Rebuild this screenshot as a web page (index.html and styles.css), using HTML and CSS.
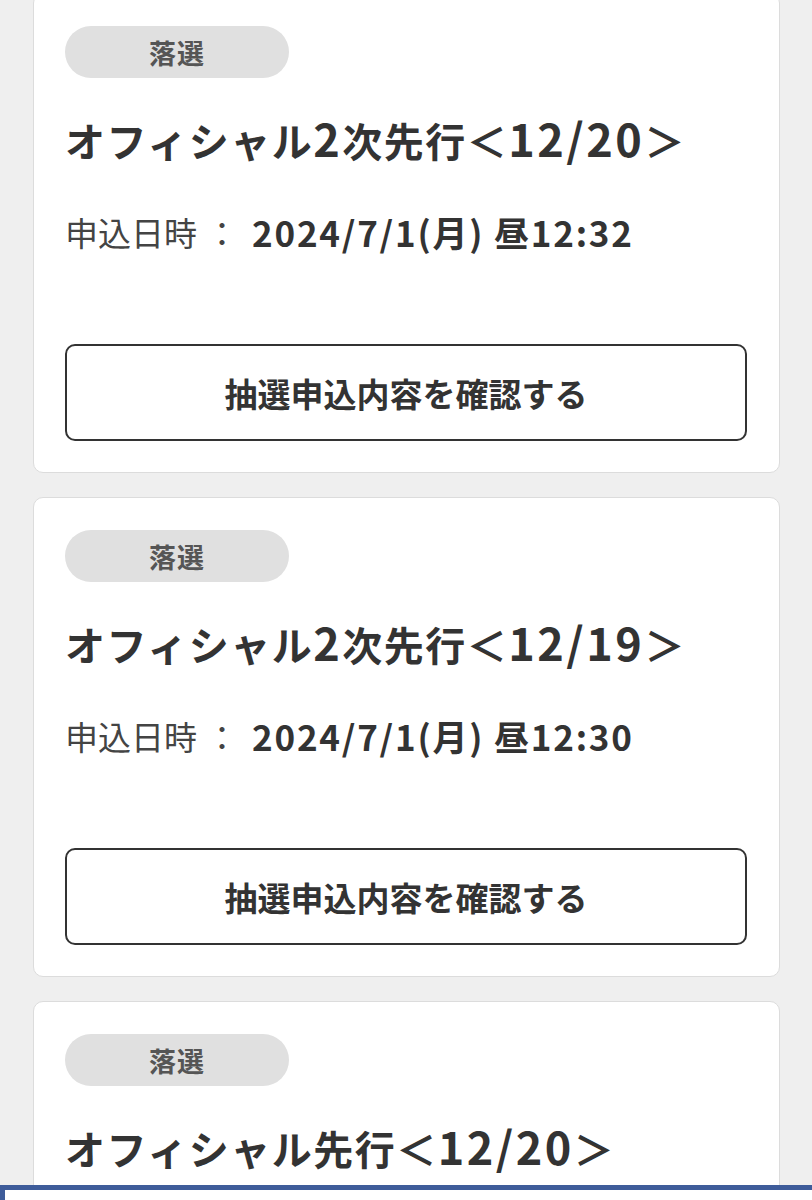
FILE: index.html
```html
<!DOCTYPE html>
<html lang="ja">
<head>
<meta charset="utf-8">
<link rel="stylesheet" href="styles.css">
</head>
<body>
<div class="list">
  <div class="card">
    <span class="badge">落選</span>
    <h2 class="title">オフィシャル<span class="num">2</span>次先行＜<span class="num">12/20</span>＞</h2>
    <p class="date"><span class="label">申込日時</span><span class="colon">：</span><span class="value">2024/7/1(月) 昼12:32</span></p>
    <button class="btn">抽選申込内容を確認する</button>
  </div>
  <div class="card">
    <span class="badge">落選</span>
    <h2 class="title">オフィシャル<span class="num">2</span>次先行＜<span class="num">12/19</span>＞</h2>
    <p class="date"><span class="label">申込日時</span><span class="colon">：</span><span class="value">2024/7/1(月) 昼12:30</span></p>
    <button class="btn">抽選申込内容を確認する</button>
  </div>
  <div class="card">
    <span class="badge">落選</span>
    <h2 class="title">オフィシャル先行＜<span class="num">12/20</span>＞</h2>
    <p class="date"><span class="label">申込日時</span><span class="colon">：</span><span class="value">2024/7/1(月) 昼12:28</span></p>
    <button class="btn">抽選申込内容を確認する</button>
  </div>
</div>
<div class="bottombar"></div>
</body>
</html>
```
FILE: styles.css
```css
* { box-sizing: border-box; }
html, body { margin: 0; padding: 0; }
body {
  background: #efefef;
  font-family: "Noto Sans CJK JP", "Noto Sans", sans-serif;
  color: #333;
  height: 1200px;
  overflow: hidden;
}
.list {
  margin: -7px 32px 0 33px;
  display: flex;
  flex-direction: column;
  gap: 24px;
}
.card {
  background: #fff;
  border: 1px solid #dcdcdc;
  border-radius: 10px;
  padding: 32px 32px 31px 31px;
  display: flex;
  flex-direction: column;
  align-items: flex-start;
}
.badge {
  display: flex;
  align-items: center;
  justify-content: center;
  width: 224px;
  height: 52px;
  border-radius: 26px;
  background: #e0e0e0;
  color: #555;
  font-size: 27px;
  font-weight: 700;
  letter-spacing: 1px;
}
.title {
  margin: 34px 0 0;
  font-size: 40px;
  line-height: 56px;
  height: 56px;
  font-weight: 700;
  letter-spacing: 1.5px;
  color: #333;
  white-space: nowrap;
}
.num {
  font-size: 45px;
  line-height: 1;
  letter-spacing: 2.5px;
}
.date {
  margin: 42px 0 0;
  font-size: 33px;
  line-height: 44px;
  height: 44px;
  display: flex;
  align-items: center;
  white-space: nowrap;
}
.label {
  color: #444;
  font-weight: 400;
}
.colon {
  color: #444;
  width: 44px;
  text-align: center;
  margin-left: 3px;
  margin-right: 8px;
}
.value {
  font-weight: 700;
  color: #333;
  font-size: 35px;
  letter-spacing: 1.8px;
}
.btn {
  margin-top: 90px;
  width: 100%;
  height: 97px;
  background: #fff;
  border: 2px solid #333;
  border-radius: 10px;
  font-family: inherit;
  font-size: 33px;
  font-weight: 700;
  color: #333;
  letter-spacing: 0;
  padding: 0;
}
.bottombar {
  position: fixed;
  left: 0;
  right: 0;
  bottom: 0;
  height: 15px;
  background: #fff;
  border-top: 5px solid #3e5c9a;
  border-left: 5px solid #3e5c9a;
}
```
